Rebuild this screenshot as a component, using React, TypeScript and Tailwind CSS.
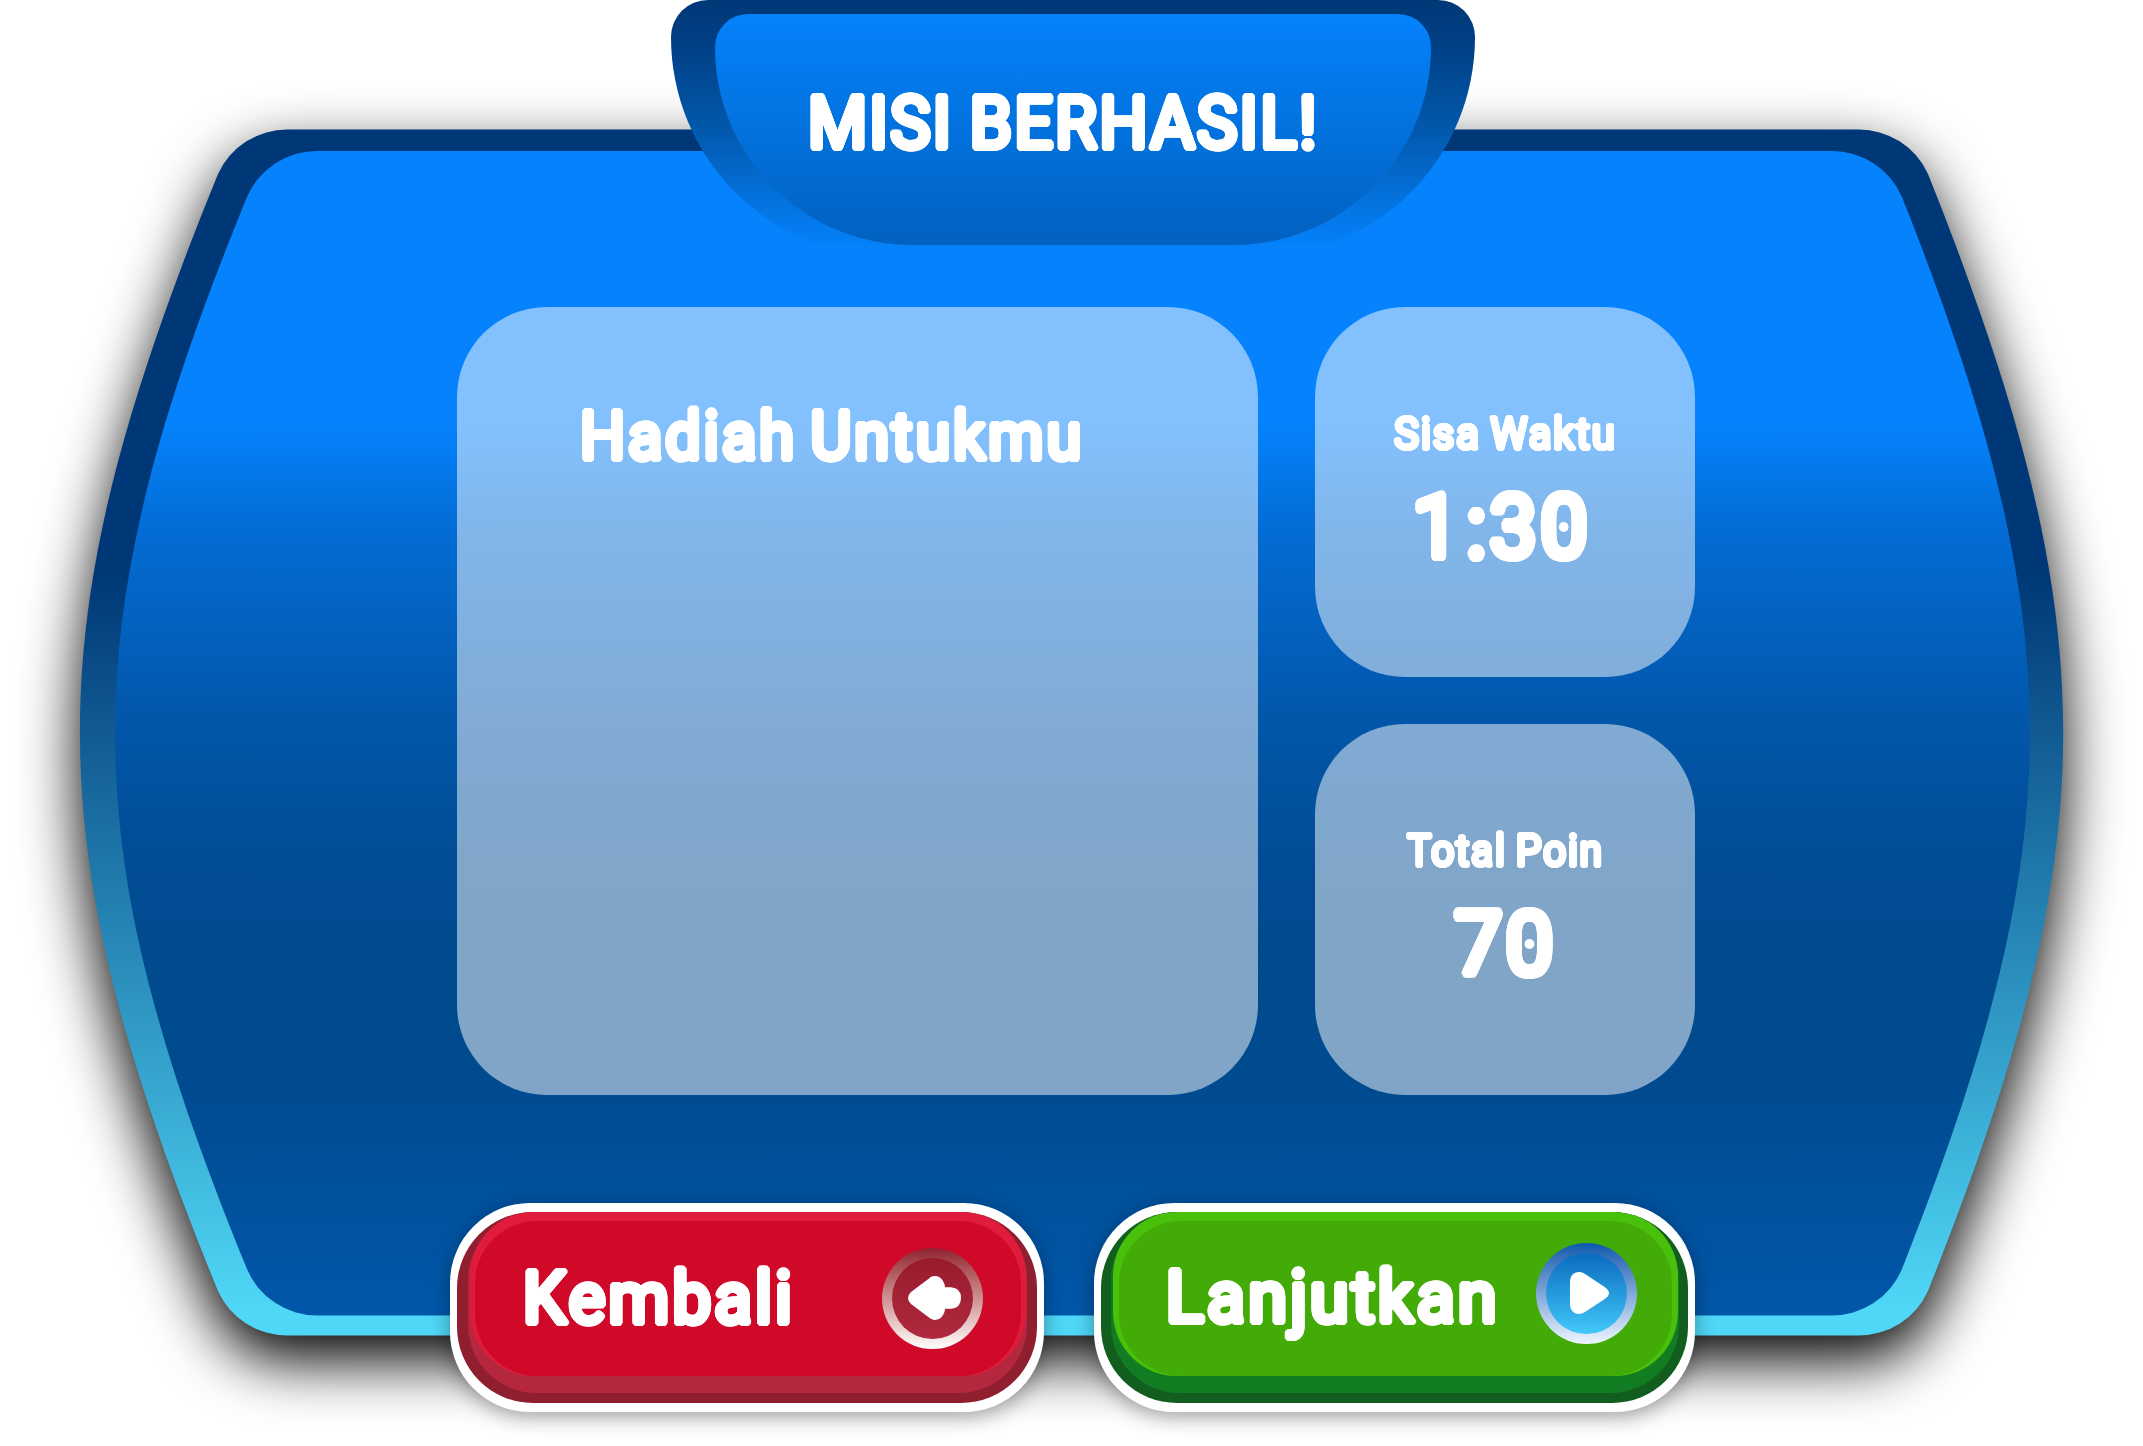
import { useLayoutEffect, useRef, useState } from "react";
import type { ReactNode } from "react";

/** Rounded lettering: the glyphs are grown by a ring of solid shadows, which rounds their terminals. */
const LETTERING =
  "inline-block origin-left whitespace-nowrap [text-shadow:0.045em_0_0_#fff,-0.045em_0_0_#fff,0_0.045em_0_#fff,0_-0.045em_0_#fff,0.032em_0.032em_0_#fff,-0.032em_0.032em_0_#fff,0.032em_-0.032em_0_#fff,-0.032em_-0.032em_0_#fff,0.042em_0.017em_0_#fff,-0.042em_0.017em_0_#fff,0.042em_-0.017em_0_#fff,-0.042em_-0.017em_0_#fff,0.017em_0.042em_0_#fff,-0.017em_0.042em_0_#fff,0.017em_-0.042em_0_#fff,-0.017em_-0.042em_0_#fff]";

/** A line of text condensed or widened to fill the given width. */
function FitText({ width, className, children }: { width: number; className: string; children: ReactNode }) {
  const ref = useRef<HTMLSpanElement>(null);
  const [scale, setScale] = useState(1);
  useLayoutEffect(() => {
    if (ref.current) setScale(width / ref.current.offsetWidth);
  }, [width]);
  return (
    <div className={className} style={{ width }}>
      <span ref={ref} className={LETTERING} style={{ transform: `scaleX(${scale})` }}>
        {children}
      </span>
    </div>
  );
}

function Zero() {
  return (
    <span className="relative inline-block tracking-normal">
      0
      <span className="absolute left-1/2 top-1/2 size-2.5 -translate-x-1/2 -translate-y-1/2 rounded-full bg-white" />
    </span>
  );
}

function StatCard({ label, labelWidth, children }: { label: string; labelWidth: number; children: ReactNode }) {
  return (
    <section className="flex h-[370.5px] flex-col items-center rounded-[90px] bg-white/50 pt-[105px]">
      <FitText width={labelWidth} className="text-[44px] leading-[44px] tracking-[0.04em] [word-spacing:-0.06em]">{label}</FitText>
      {children}
    </section>
  );
}

function BackIcon() {
  return (
    <span className="flex size-[101px] items-center justify-center rounded-full bg-linear-to-b from-[#901f31] to-white">
      <span className="flex size-[81px] items-center justify-center rounded-full bg-linear-to-b from-[#971b2d] to-[#b0293f]">
        <svg className="ml-1 h-[44px] w-[53px]" viewBox="0 0 53 44" fill="#fff">
          <path d="M3 16 L21 2.5 C25 -1.5 32 -.5 35 5 Q37 8 37 11.3 H43 Q53 12 53 22 Q53 32 43 32.7 H37 Q37 36 35 39 C32 44.500 25 45.500 21 41.500 L3 28 Q-3 22 3 16Z" />
        </svg>
      </span>
    </span>
  );
}

function PlayIcon() {
  return (
    <span className="flex size-[101px] items-center justify-center rounded-full bg-linear-to-b from-[#0459ad] to-[#eef6ff]">
      <span className="flex size-[81px] items-center justify-center rounded-full bg-linear-to-b from-[#0a6bbf] to-[#43c8fa]">
        <svg className="ml-1.5 h-[42px] w-[39px]" viewBox="0 0 39 42" fill="#fff">
          <path d="M0 10 C0 1 8 -2.500 15 2 L34 14.500 Q39 18 39 21 Q39 24 34 27.500 L15 40 C8 44.500 0 41 0 32Z" />
        </svg>
      </span>
    </span>
  );
}

export default function App() {
  return (
    <main className="relative h-[1446px] w-[2143px] overflow-hidden bg-white text-white [font-family:Roboto,'Liberation_Sans',sans-serif]">
      {/* Curved board: rim and face */}
      <div className="absolute inset-0 [filter:drop-shadow(0_25px_30px_#000)]">
        <div className="h-full w-full bg-[linear-gradient(180deg,#003877_0px,#003877_575px,#4fd7f7_1310px)] [clip-path:path('M288_129.500H1858A76_76_0_0_1_1928_174C2108.300_626_2108.300_839_1928_1291A76_76_0_0_1_1858_1335.500H288A76_76_0_0_1_218_1291C33.900_839_33.900_626_218_174A76_76_0_0_1_288_129.500Z')]" />
      </div>
      <div className="absolute inset-0 bg-[linear-gradient(180deg,#0582fc_0px,#0582fc_425px,#036cd4_530px,#0257ab_715px,#014d96_850px,#004a8d_980px,#004b90_1090px,#0257aa_1315px)] [clip-path:path('M318_151H1831A76_76_0_0_1_1902_197C2072.500_627_2072.500_839_1902_1269A76_76_0_0_1_1831_1315.500H318A76_76_0_0_1_247_1269C71_839_71_627_247_197A76_76_0_0_1_318_151Z')]" />

      <div className="relative flex h-full flex-col">
        {/* Title badge */}
        <header className="ml-[670.5px] h-[257px] w-[804.500px] rounded-t-[37px] rounded-b-[220px] bg-[linear-gradient(180deg,#003877_0px,#003f84_40px,#0257a9_125px,#0472de_200px,#0582fc_250px)] pl-[44.500px] pt-[14px]">
          <div className="h-[231px] w-[716px] rounded-t-[33px] rounded-b-[198px] bg-linear-to-b from-[#0582fc] to-[#0161c0] pl-[93px] pt-[73.500px]">
            <h1>
              <FitText width={511} className="text-[72px] leading-[72px] tracking-[0.035em] [word-spacing:-0.04em]">MISI BERHASIL!</FitText>
            </h1>
          </div>
        </header>

        {/* Result cards */}
        <div className="ml-[457px] mt-[49.500px] flex h-[788px] gap-[57px]">
          <section className="w-[801px] rounded-[90px] bg-white/50 pl-[123px] pt-[97px]">
            <FitText width={504} className="text-[66px] leading-[66px] tracking-[0.045em] [word-spacing:-0.08em]">Hadiah Untukmu</FitText>
          </section>
          <div className="flex w-[380px] flex-col justify-between">
            <StatCard label="Sisa Waktu" labelWidth={223}>
              <FitText width={176} className="mt-[27px] mr-2.5 text-[88px] leading-[88px] tracking-[0.03em] [word-spacing:-0.24em]">
                1 :3<Zero />
              </FitText>
            </StatCard>
            <StatCard label="Total Poin" labelWidth={197}>
              <FitText width={100} className="mt-[27px] mr-[3px] text-[88px] leading-[88px] tracking-[0.03em]">
                7<Zero />
              </FitText>
            </StatCard>
          </div>
        </div>

        {/* Actions */}
        <div className="ml-[449.500px] mt-[108px] flex gap-[50px]">
          <button className="h-[209px] w-[594.500px] rounded-[80px] bg-white px-[7.500px] py-[9px] text-left shadow-[0_5px_20px_rgba(0,0,0,0.35)]">
            <span className="block h-[191px] overflow-hidden rounded-[76px] bg-[#8f1e2f] pr-[9.500px] pl-[10.500px]">
              <span className="block h-[181px] rounded-[68px] bg-[#b5273e] pr-px pl-[2px]">
                <span className="block h-[164px] rounded-[64px] bg-[#df1c3c] px-[5.500px] pt-[9px]">
                  <span className="flex h-[155px] rounded-[62px] bg-[#d00929] pl-[48px]">
                    <FitText width={272} className="mt-[42px] text-[72px] leading-[72px] tracking-[0.045em]">Kembali</FitText>
                    <span className="ml-[87px] mt-[27px]">
                      <BackIcon />
                    </span>
                  </span>
                </span>
              </span>
            </span>
          </button>
          <button className="h-[209px] w-[601px] rounded-[80px] bg-white px-[7px] py-[9px] text-left shadow-[0_5px_20px_rgba(0,0,0,0.35)]">
            <span className="block h-[191px] overflow-hidden rounded-[76px] bg-[#125e1e] pr-[9px] pl-[10px]">
              <span className="block h-[181px] rounded-[68px] bg-[#117c22] pr-px pl-[2px]">
                <span className="block h-[164px] rounded-[64px] bg-[#49c00a] px-[6px] pt-[9px]">
                  <span className="flex h-[155px] rounded-[62px] bg-[#42ab08] pl-[47px]">
                    <FitText width={334} className="mt-[41px] text-[72px] leading-[72px] tracking-[0.045em]">Lanjutkan</FitText>
                    <span className="ml-[36px] mt-[22px]">
                      <PlayIcon />
                    </span>
                  </span>
                </span>
              </span>
            </span>
          </button>
        </div>
      </div>
    </main>
  );
}
